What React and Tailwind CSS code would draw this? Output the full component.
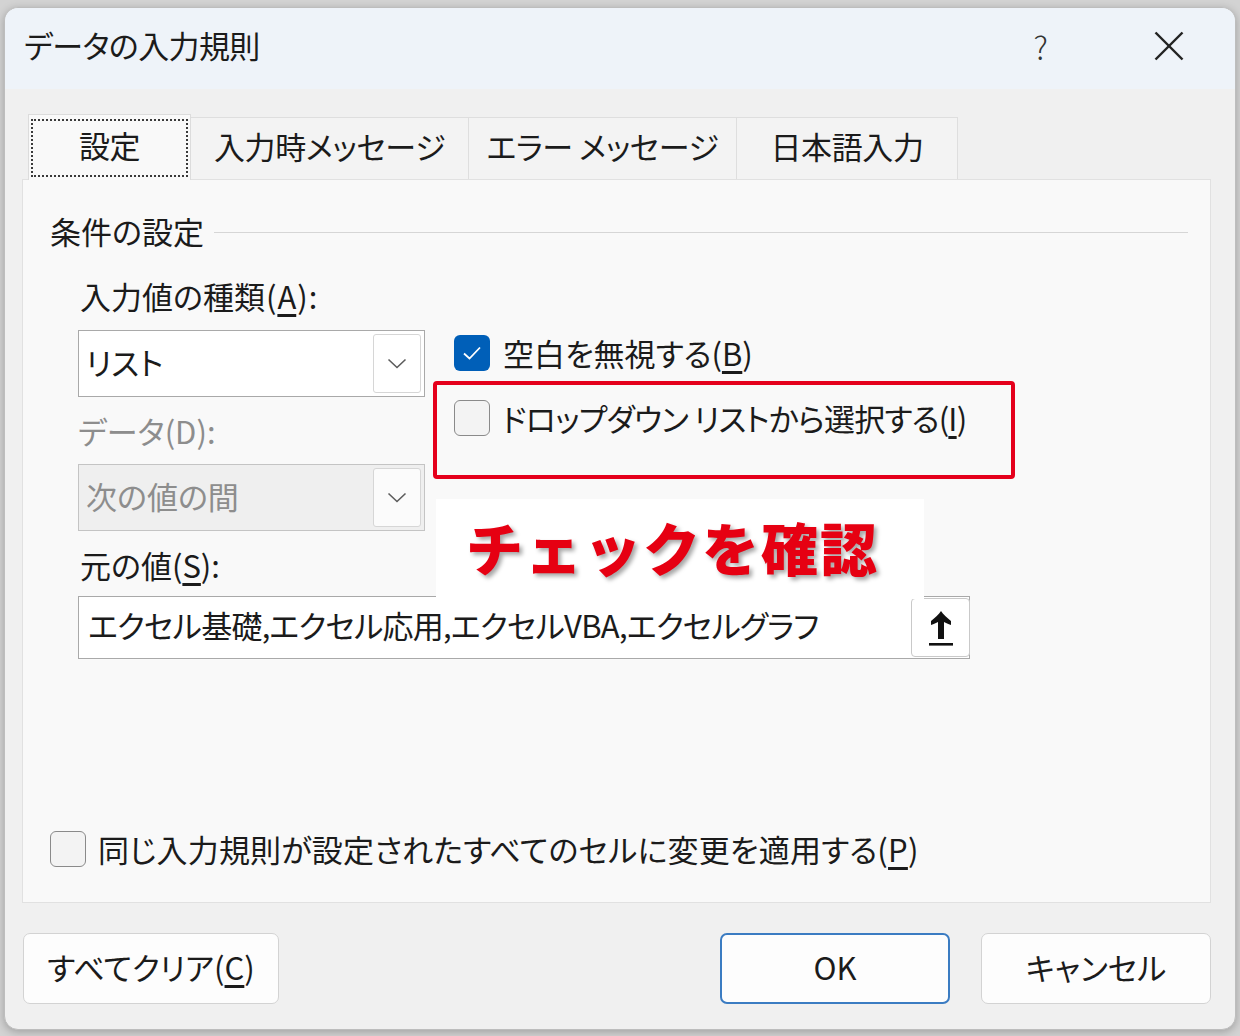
import React from "react";

const JP = "font-['Noto_Sans_CJK_JP',sans-serif] [font-feature-settings:'palt']";

function Chevron() {
  return (
    <svg width="20" height="11" viewBox="0 0 20 11" fill="none">
      <polyline points="1.5,1.5 10,9.5 18.5,1.5" stroke="#5c5c5c" strokeWidth="1.6" />
    </svg>
  );
}

function Combo({ text, disabled }) {
  return (
    <div
      className={
        "flex h-[67px] w-[347px] items-stretch border " +
        (disabled ? "border-[#c4c4c4] bg-[#efefef]" : "border-[#a9a9a9] bg-white")
      }
    >
      <div
        className={
          "flex flex-1 items-center pb-[2px] pl-[7px] text-[31px] " +
          (disabled ? "text-[#8d8d8d]" : "text-[#1b1b1b]")
        }
      >
        {text}
      </div>
      <div
        className={
          "my-[3px] mr-[3px] flex w-[48px] items-center justify-center rounded-[3px] border border-[#d6d6d6] " +
          (disabled ? "bg-[#fbfbfb]" : "bg-white")
        }
      >
        <Chevron />
      </div>
    </div>
  );
}

function Box({ checked }) {
  if (checked) {
    return (
      <div className="flex h-[36px] w-[36px] shrink-0 items-center justify-center rounded-[6px] bg-[#005fb8]">
        <svg width="20" height="16" viewBox="0 0 20 16" fill="none">
          <polyline points="2,8.5 7.5,13.5 18,2.5" stroke="#ffffff" strokeWidth="1.8" />
        </svg>
      </div>
    );
  }
  return (
    <div className="h-[36px] w-[36px] shrink-0 rounded-[6px] border-[1.5px] border-[#8a8a8a] bg-[#f3f3f3]" />
  );
}

function Tab({ children, w, active }) {
  return (
    <div
      className={
        "relative -ml-px flex items-center justify-center border border-b-0 pb-[5px] text-[31px] text-[#1b1b1b] " +
        (active
          ? "z-10 mb-[-1px] h-[66px] border-[#dcdcdc] bg-[#f9f9f9]"
          : "mt-[3px] h-[62px] border-[#dedede] bg-[#f3f3f3]")
      }
      style={{ width: w }}
    >
      {active && (
        <div className="absolute inset-x-[2px] top-[4px] bottom-[3px] border-2 border-dotted border-[#3a3a3a]" />
      )}
      <span className="relative tracking-[-0.4px]">{children}</span>
    </div>
  );
}

function Button({ children, w, primary }) {
  return (
    <div
      className={
        "flex h-[71px] items-center justify-center rounded-[7px] bg-[#fdfdfd] pb-[3px] text-[31px] text-[#1b1b1b] " +
        (primary ? "border-2 border-[#3b7cc2]" : "border border-[#d3d3d3]")
      }
      style={{ width: w }}
    >
      {children}
    </div>
  );
}

export default function App() {
  return (
    <div className={"h-[1036px] w-[1240px] overflow-hidden bg-[#d3d3d3] pl-[4px] pt-[7px] " + JP}>
      <div className="flex h-[1023px] w-[1232px] flex-col overflow-hidden rounded-[14px] border border-[#bdbdbd] bg-[#f0f0f0] shadow-[0_2px_8px_rgba(0,0,0,0.25)]">
        {/* title bar */}
        <div className="flex h-[81px] shrink-0 items-center bg-[#eef3f9] pb-[6px] pl-[19px]">
          <div className="text-[31px] tracking-[-0.6px] text-[#1b1b1b]">データの入力規則</div>
          <div className="ml-auto mr-[106px] text-[32px] font-light text-[#333]">?</div>
          <div className="mr-[51px]">
            <svg width="30" height="30" viewBox="0 0 30 30">
              <line x1="1.5" y1="1.5" x2="28.5" y2="28.5" stroke="#222" strokeWidth="2.4" />
              <line x1="28.5" y1="1.5" x2="1.5" y2="28.5" stroke="#222" strokeWidth="2.4" />
            </svg>
          </div>
        </div>

        {/* body */}
        <div className="flex flex-1 flex-col pl-[17px] pr-[24px]">
          <div className="mt-[25px] flex h-[65px] items-end pl-[7px]">
            <Tab w={163} active>
              設定
            </Tab>
            <Tab w={279}>入力時メッセージ</Tab>
            <Tab w={269}>エラー メッセージ</Tab>
            <Tab w={222}>日本語入力</Tab>
          </div>

          <div className="relative flex h-[724px] flex-col border border-[#e1e1e1] bg-[#f9f9f9]">
            <div className="mt-[31px] flex h-[40px] items-center pl-[27px]">
              <span className="text-[31px] text-[#1b1b1b]">条件の設定</span>
              <div className="ml-[10px] mr-[22px] mt-[2px] h-px flex-1 bg-[#d6d6d6]" />
            </div>

            <div className="pl-[55px] text-[#1b1b1b]">
              <div className="mt-[25px] flex h-[40px] items-center pl-[2px] text-[31px]">
                入力値の種類<span className="mx-[1px]">(</span>
                <span className="underline underline-offset-[5px]">A</span>
                <span className="mx-[1px]">)</span>:
              </div>
              <div className="mt-[14px] flex">
                <div className="flex w-[347px] flex-col">
                  <Combo text="リスト" />
                  <div className="mt-[14px] flex h-[40px] items-center text-[31px] text-[#8d8d8d]">
                    データ(D):
                  </div>
                  <div className="mt-[13px]">
                    <Combo text="次の値の間" disabled />
                  </div>
                </div>
                <div className="ml-[29px] flex flex-col pt-[5px]">
                  <div className="flex h-[36px] items-center">
                    <Box checked />
                    <span className="ml-[13px] text-[31px]">
                      空白を無視する(<span className="underline underline-offset-[5px]">B</span>)
                    </span>
                  </div>
                  <div className="mt-[29px] flex h-[36px] items-center">
                    <Box />
                    <span className="ml-[12px] text-[31px] tracking-[-0.8px]">
                      ドロップダウン リストから選択する(<span className="underline underline-offset-[5px]">I</span>)
                    </span>
                  </div>
                </div>
              </div>
              <div className="mt-[14px] flex h-[40px] items-center pl-[2px] text-[31px]">
                元の値(<span className="underline underline-offset-[5px]">S</span>):
              </div>
              <div className="mt-[11px] flex h-[63px] w-[892px] items-center border border-[#a9a9a9] bg-white">
                <div className="flex-1 pb-[4px] pl-[9px] text-[31px] tracking-[-0.75px]">
                  エクセル基礎,エクセル応用,エクセルVBA,エクセルグラフ
                </div>
                <div className="mr-[-1px] flex h-[59px] w-[59px] items-center justify-center rounded-[4px] border border-[#c9c9c9] bg-white">
                  <svg width="26" height="36" viewBox="0 0 26 36">
                    <path
                      d="M13 1 C15 4 19 8 23 11 L23 15 C20 14 18 13 16 12 L16 29 L10 29 L10 12 C8 13 6 14 3 15 L3 11 C7 8 11 4 13 1 Z"
                      fill="#111"
                    />
                    <rect x="1" y="33" width="24" height="2.6" fill="#111" />
                  </svg>
                </div>
              </div>
            </div>

            <div className="mb-[35px] mt-auto flex h-[36px] items-center pl-[27px]">
              <Box />
              <span className="ml-[12px] text-[31px] tracking-[0.2px] text-[#1b1b1b]">
                同じ入力規則が設定されたすべてのセルに変更を適用する(<span className="underline underline-offset-[5px]">P</span>)
              </span>
            </div>

            {/* annotations */}
            <div className="absolute left-[410px] top-[201px] h-[98px] w-[582px] rounded-[4px] border-[4px] border-[#e5001c]" />
            <div className="absolute left-[413px] top-[319px] flex h-[100px] w-[488px] items-center bg-white pb-[4px] pl-[30px]">
              <span className="font-['Noto_Sans_CJK_JP',sans-serif] text-[57px] font-black tracking-[2px] text-[#e60012] [font-feature-settings:normal] [text-shadow:3px_3px_4px_rgba(0,0,0,0.35)]">
                チェックを確認
              </span>
            </div>
          </div>

          <div className="mt-[30px] flex items-start pl-[1px]">
            <Button w={256}>
              すべてクリア(<span className="underline underline-offset-[5px]">C</span>)
            </Button>
            <div className="ml-auto flex gap-[31px]">
              <Button w={230} primary>
                OK
              </Button>
              <Button w={230}>キャンセル</Button>
            </div>
          </div>
        </div>
      </div>
    </div>
  );
}
